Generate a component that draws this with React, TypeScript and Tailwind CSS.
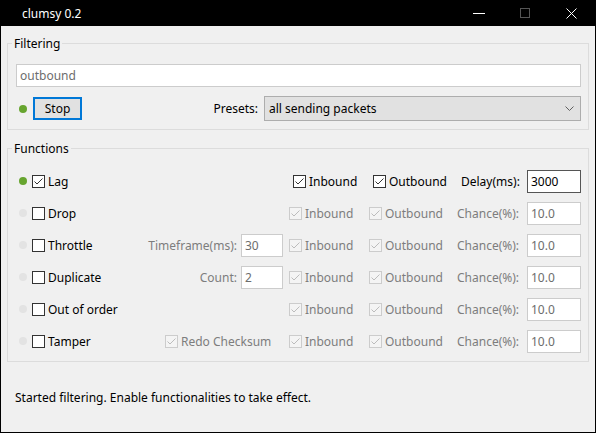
import React from "react";

// small check mark used inside checkboxes
const Check = ({ color }: { color: string }) => (
  <svg width="11" height="11" viewBox="0 0 11 11" className="block">
    <polyline points="1.5,5.5 4,8 9.5,2.5" fill="none" stroke={color} strokeWidth="1" />
  </svg>
);

const Box = ({ checked, disabled }: { checked?: boolean; disabled?: boolean }) => (
  <div
    className={
      disabled
        ? "w-[13px] h-[13px] border border-[#cccccc] bg-[#f4f4f4] flex items-center justify-center shrink-0"
        : "w-[13px] h-[13px] border border-[#333333] bg-white flex items-center justify-center shrink-0"
    }
  >
    {checked && <Check color={disabled ? "#bcbcbc" : "#333333"} />}
  </div>
);

const Dot = ({ on }: { on?: boolean }) => (
  <div className={on ? "w-[8px] h-[8px] rounded-full bg-[#67a52f] shrink-0" : "w-[8px] h-[8px] rounded-full bg-[#e3e3e3] shrink-0"} />
);

const Field = ({ value, w, dark }: { value: string; w: string; dark?: boolean }) => (
  <div
    className={
      dark
        ? `${w} h-[23px] border border-[#555555] bg-white pl-[3px] flex items-center text-black`
        : `${w} h-[23px] border border-[#cccccc] bg-white pl-[3px] flex items-center text-[#6d6d6d]`
    }
  >
    {value}
  </div>
);

interface RowProps {
  name: string;
  on?: boolean;
  extra?: React.ReactNode;
}

// one line of the Functions group
const FuncRow = ({ name, on, extra }: RowProps) => {
  const dis = !on;
  return (
    <div className="h-[32px] flex items-center">
      <Dot on={on} />
      <div className="ml-[5px]">
        <Box checked={on} />
      </div>
      <span className="ml-[3px] flex-1">{name}</span>
      {extra}
      {on ? (
        <div className="flex items-center">
          <div className="w-[80px] flex items-center gap-[3px]">
            <Box checked />
            <span>Inbound</span>
          </div>
          <div className="w-[88px] flex items-center gap-[3px]">
            <Box checked />
            <span>Outbound</span>
          </div>
          <span className="w-[66px]">Delay(ms):</span>
          <Field value="3000" w="w-[54px]" dark />
        </div>
      ) : (
        <div className="flex items-center text-[#7d7d7d]">
          <div className="w-[80px] flex items-center gap-[3px]">
            <Box checked disabled={dis} />
            <span>Inbound</span>
          </div>
          <div className="w-[88px] flex items-center gap-[3px]">
            <Box checked disabled={dis} />
            <span>Outbound</span>
          </div>
          <span className="w-[70px]">Chance(%):</span>
          <Field value="10.0" w="w-[54px]" />
        </div>
      )}
    </div>
  );
};

const LabeledField = ({ label, value }: { label: string; value: string }) => (
  <div className="flex items-center mr-[6px]">
    <span className="text-[#7d7d7d] mr-[4px]">{label}</span>
    <Field value={value} w="w-[42px]" />
  </div>
);

const App: React.FC = () => {
  return (
    <div className="w-[596px] h-[433px] bg-black px-px pb-px flex flex-col font-['Noto_Sans',sans-serif] text-[12px] leading-[17px] text-black">
      {/* title bar */}
      <div className="h-[26px] flex items-center text-white">
        <span className="ml-[21px] flex-1">clumsy 0.2</span>
        <div className="w-[12px] h-px bg-white mr-[35px]" />
        <div className="w-[10px] h-[10px] border border-[#555555] mr-[36px]" />
        <svg width="11" height="11" viewBox="0 0 11 11" className="mr-[18px]">
          <path d="M0.5 0.5 L10.5 10.5 M10.5 0.5 L0.5 10.5" stroke="white" strokeWidth="1" />
        </svg>
      </div>

      <div className="flex-1 bg-[#f0f0f0] flex flex-col">
        {/* Filtering */}
        <fieldset className="mx-[6px] mt-[9px] border border-[#dcdcdc] pt-[12px] pl-[8px] pr-[7px] pb-[8px]">
          <legend className="-ml-[4px] px-[2px]">Filtering</legend>
          <div className="h-[23px] border border-[#cccccc] bg-white pl-[3px] flex items-center text-[#6d6d6d]">
            outbound
          </div>
          <div className="mt-[9px] h-[25px] flex items-center">
            <div className="ml-[3px]">
              <Dot on />
            </div>
            <div className="ml-[6px] w-[49px] h-[23px] border-2 border-[#0078d7] bg-[#e1e1e1] flex items-center justify-center">
              Stop
            </div>
            <span className="ml-auto mr-[6px]">Presets:</span>
            <div className="w-[317px] h-[25px] border border-[#adadad] bg-[#e1e1e1] pl-[4px] pr-[6px] flex items-center justify-between">
              <span>all sending packets</span>
              <svg width="9" height="6" viewBox="0 0 9 6">
                <polyline points="0.5,0.5 4.5,4.5 8.5,0.5" fill="none" stroke="#606060" strokeWidth="1" />
              </svg>
            </div>
          </div>
        </fieldset>

        {/* Functions */}
        <fieldset className="mx-[6px] mt-[10px] border border-[#dcdcdc] pt-[8px] pl-[11px] pr-[7px] pb-[4px]">
          <legend className="-ml-[7px] px-[2px]">Functions</legend>
          <FuncRow name="Lag" on />
          <FuncRow name="Drop" />
          <FuncRow name="Throttle" extra={<LabeledField label="Timeframe(ms):" value="30" />} />
          <FuncRow name="Duplicate" extra={<LabeledField label="Count:" value="2" />} />
          <FuncRow name="Out of order" />
          <FuncRow
            name="Tamper"
            extra={
              <div className="w-[124px] flex items-center gap-[3px] text-[#7d7d7d]">
                <Box checked disabled />
                <span>Redo Checksum</span>
              </div>
            }
          />
        </fieldset>

        <div className="mt-[27px] ml-[14px]">Started filtering. Enable functionalities to take effect.</div>
      </div>
    </div>
  );
};

export default App;
